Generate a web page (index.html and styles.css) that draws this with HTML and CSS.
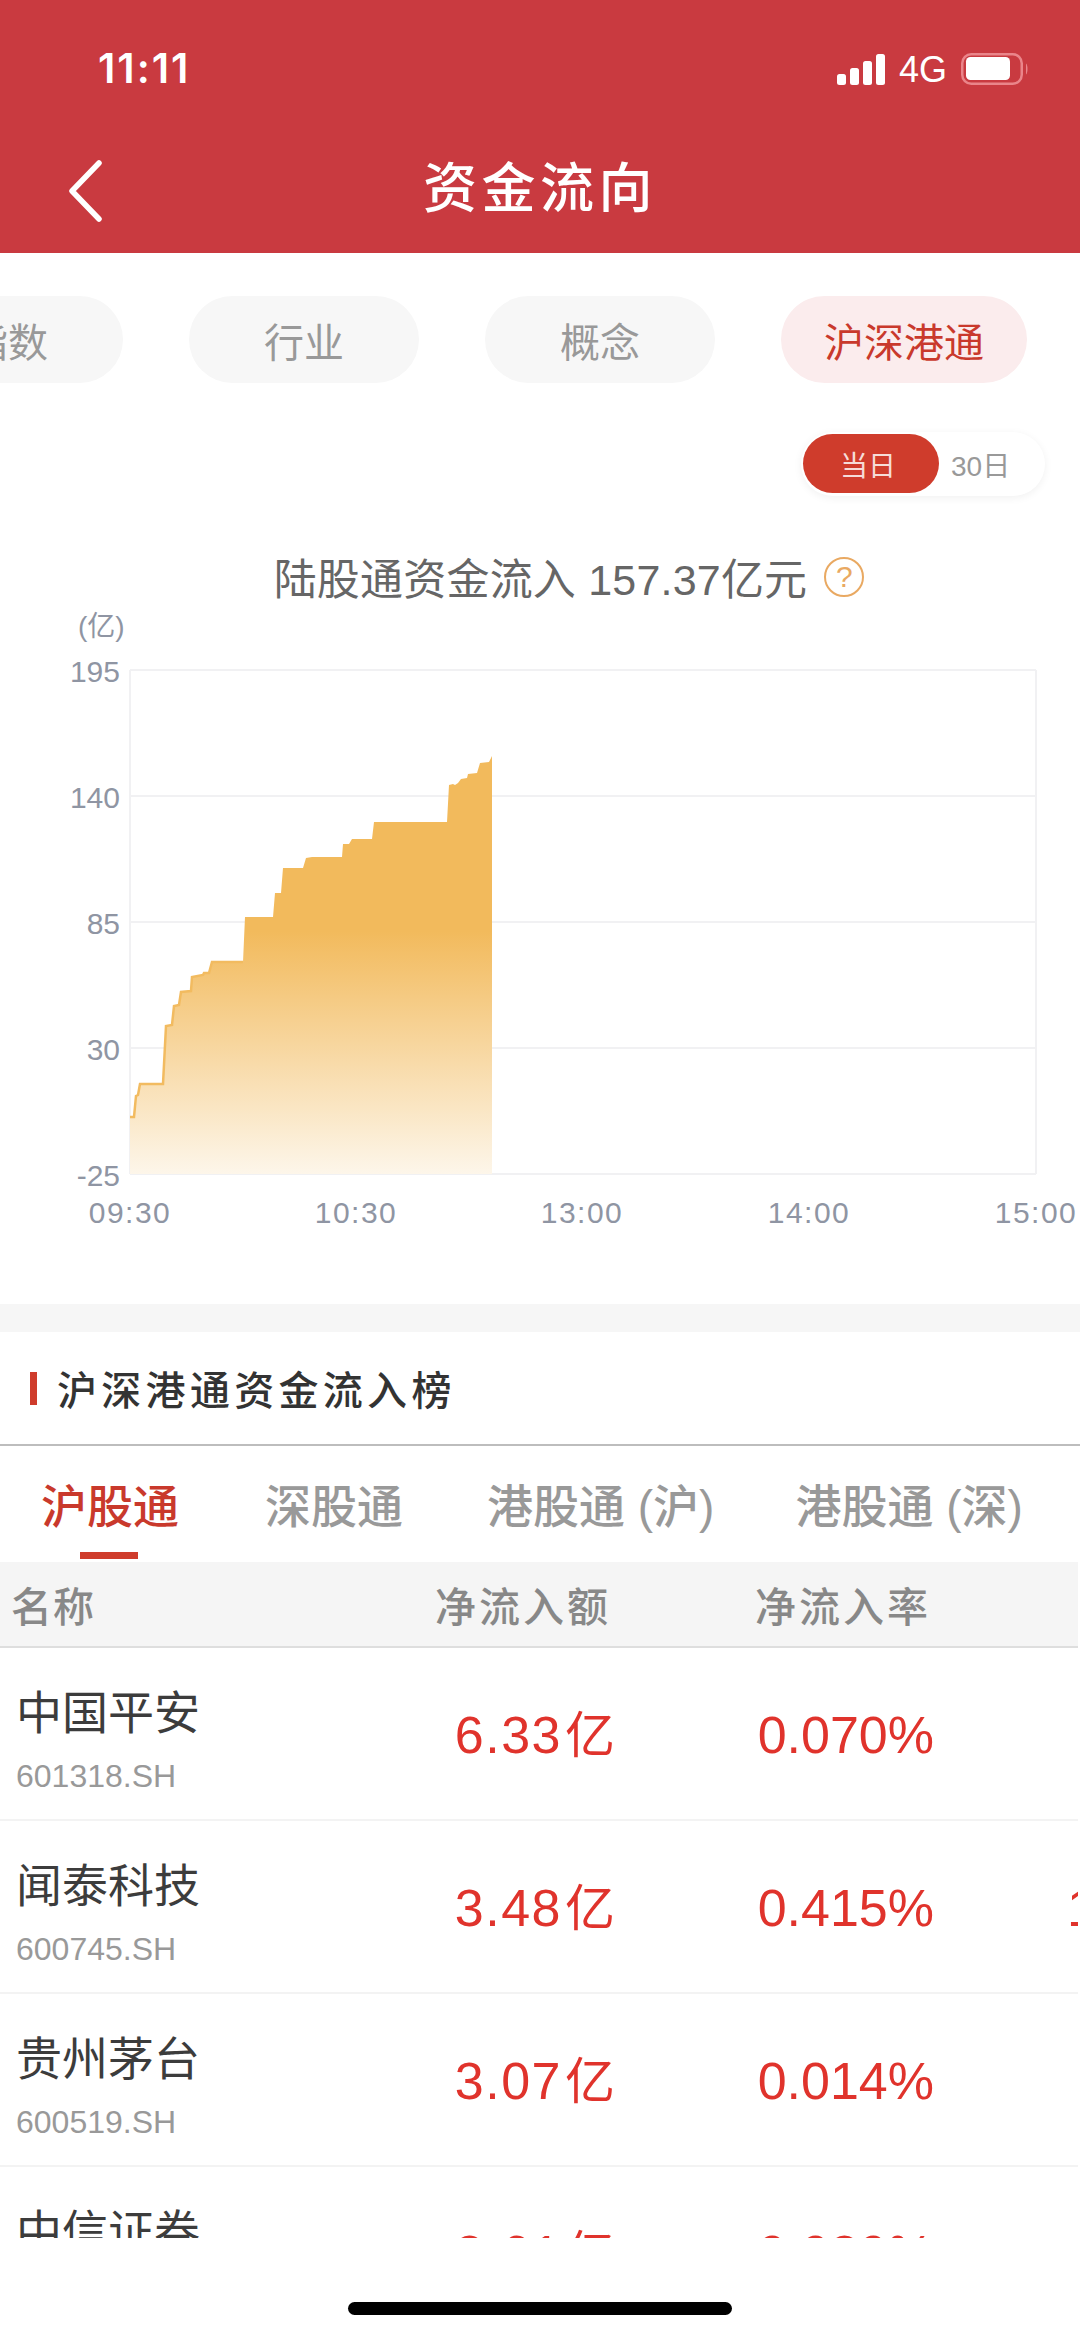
FILE: index.html
```html
<!DOCTYPE html>
<html>
<head>
    <meta charset="utf-8">
    <title>资金流向</title>
    <link rel="stylesheet" href="styles.css">
</head>
<body>
    <div class="app">
        <div class="topbar">
            <div class="status">
                <span class="clock">11:11</span>
                <div class="status-right">
                    <svg class="signal" width="48" height="31" viewBox="0 0 48 31">
                        <rect x="0" y="20" width="9" height="11" rx="2.5" fill="#fff"/>
                        <rect x="13" y="14" width="9" height="17" rx="2.5" fill="#fff"/>
                        <rect x="26" y="7" width="9" height="24" rx="2.5" fill="#fff"/>
                        <rect x="39" y="0" width="9" height="31" rx="2.5" fill="#fff"/>
                    </svg>
                    <span class="net">4G</span>
                    <svg class="battery" width="68" height="32" viewBox="0 0 68 32">
                        <rect x="1.25" y="1.25" width="59.5" height="29.5" rx="9" fill="none" stroke="#ea858a" stroke-width="2.5"/>
                        <rect x="5" y="4" width="44" height="23" rx="4.5" fill="#fff"/>
                        <path d="M65 10.5c2 1.500 2 9.500 0 11z" fill="#ea858a"/>
                    </svg>
                </div>
            </div>
            <div class="navbar">
                <svg class="back" width="40" height="62" viewBox="0 0 40 62">
                    <polyline points="33,3 6,31 33,59" fill="none" stroke="#fff" stroke-width="5.500" stroke-linecap="round" stroke-linejoin="round"/>
                </svg>
                <h1>资金流向</h1>
            </div>
        </div>

        <div class="pills">
            <span class="pill">指数</span>
            <span class="pill">行业</span>
            <span class="pill">概念</span>
            <span class="pill pill-on">沪深港通</span>
        </div>

        <div class="range-row">
            <div class="range">
                <span class="range-on">当日</span>
                <span class="range-off">30日</span>
            </div>
        </div>

        <div class="chart-title">
            <span>陆股通资金流入 157.37亿元</span>
            <span class="help">?</span>
        </div>

        <svg class="chart" width="1080" height="640" viewBox="0 600 1080 640">
            <defs>
                <linearGradient id="flow" x1="0" y1="756" x2="0" y2="1174" gradientUnits="userSpaceOnUse">
                    <stop offset="0" stop-color="#f2ba5c"/>
                    <stop offset="0.42" stop-color="#f2ba5c"/>
                    <stop offset="1" stop-color="#fdf6ea"/>
                </linearGradient>
            </defs>
            <g stroke="#f1f1f3" stroke-width="2" fill="none">
                <path d="M130 670H1036M130 796H1036M130 922H1036M130 1048H1036M130 1174H1036"/>
                <path d="M130 670V1174M1036 670V1174"/>
            </g>
            <polygon fill="url(#flow)" points="130,1117 134,1117 136,1096 138,1095 140,1084 163,1084 166,1026 172,1025 174,1006 179,1005 181,992 191,991 192,977 203,975 204,973 209,973 212,962 243,962 245,917 273,917 275,893 281,893 283,868 303,868 306,858 312,857 342,857 343,844 349,844 352,839 372,839 374,822 447,822 449,785 453,784 455,785 458,783 461,779 467,778 468,774 477,773 480,763 489,762 492,756 492,1174 130,1174"/>
            <polyline fill="none" stroke="#f2bb60" stroke-width="2.500" points="130,1117 134,1117 136,1096 138,1095 140,1084 163,1084 166,1026 172,1025 174,1006 179,1005 181,992 191,991 192,977 203,975 204,973 209,973 212,962 243,962"/>
            <g class="tick tick-y">
                <text x="120" y="682">195</text>
                <text x="120" y="808">140</text>
                <text x="120" y="934">85</text>
                <text x="120" y="1060">30</text>
                <text x="120" y="1186">-25</text>
            </g>
            <g class="tick tick-x">
                <text x="130" y="1223">09:30</text>
                <text x="356" y="1223">10:30</text>
                <text x="582" y="1223">13:00</text>
                <text x="809" y="1223">14:00</text>
                <text x="1036" y="1223">15:00</text>
            </g>
            <text class="unit" x="78" y="636">(亿)</text>
        </svg>

        <div class="gap-band"></div>

        <div class="section-head">
            <span class="section-mark"></span>
            <span class="section-name">沪深港通资金流入榜</span>
        </div>

        <div class="tabs">
            <span class="tab tab-on">沪股通</span>
            <span class="tab">深股通</span>
            <span class="tab">港股通 (沪)</span>
            <span class="tab">港股通 (深)</span>
        </div>

        <div class="table-head">
            <span class="col-name">名称</span>
            <span class="col-amount">净流入额</span>
            <span class="col-rate">净流入率</span>
        </div>

        <div class="rows">
            <div class="row">
                <div class="col-name">
                    <div class="stock">中国平安</div>
                    <div class="code">601318.SH</div>
                </div>
                <span class="col-amount val">6.33<span class="yi">亿</span></span>
                <span class="col-rate val">0.070%</span>
            </div>
            <div class="row">
                <div class="col-name">
                    <div class="stock">闻泰科技</div>
                    <div class="code">600745.SH</div>
                </div>
                <span class="col-amount val">3.48<span class="yi">亿</span></span>
                <span class="col-rate val">0.415%</span>
                <span class="col-more val">1</span>
            </div>
            <div class="row">
                <div class="col-name">
                    <div class="stock">贵州茅台</div>
                    <div class="code">600519.SH</div>
                </div>
                <span class="col-amount val">3.07<span class="yi">亿</span></span>
                <span class="col-rate val">0.014%</span>
            </div>
            <div class="row">
                <div class="col-name">
                    <div class="stock">中信证券</div>
                    <div class="code">600030.SH</div>
                </div>
                <span class="col-amount val">2.61<span class="yi">亿</span></span>
                <span class="col-rate val">0.080%</span>
            </div>
        </div>

        <div class="home-wrap"><div class="home-bar"></div></div>
    </div>
</body>
</html>
```

FILE: styles.css
```css
* {
    box-sizing: border-box;
}

html, body {
    margin: 0;
    padding: 0;
    background-color: #fff;
}

.app {
    width: 1080px;
    height: 2337px;
    overflow: hidden;
    font-family: "Liberation Sans", "Noto Sans CJK SC", sans-serif;
}

/* red header */
.topbar {
    height: 253px;
    background-color: #c93a40;
    color: #fff;
}

.status {
    height: 136px;
    padding: 53px 51px 0 98px;
    display: flex;
    justify-content: space-between;
    align-items: flex-start;
}

.clock {
    font-family: Inter, sans-serif;
    font-size: 41px;
    font-weight: 600;
    line-height: 31px;
    letter-spacing: 2px;
}

.status-right {
    display: flex;
    align-items: center;
}

.net {
    font-size: 36px;
    line-height: 31px;
    margin: 0 14px;
}

.navbar {
    position: relative;
    height: 117px;
    display: flex;
    justify-content: center;
    padding-top: 16px;
}

.navbar h1 {
    margin: 0;
    font-size: 54px;
    line-height: 74px;
    font-weight: 500;
    letter-spacing: 4.500px;
}

.back {
    position: absolute;
    left: 66px;
    top: 24px;
}

/* category pills */
.pills {
    display: flex;
    gap: 66px;
    margin-top: 43px;
    margin-left: -107px;
}

.pill {
    flex: none;
    width: 230px;
    height: 87px;
    border-radius: 44px;
    background-color: #f7f7f7;
    color: #999;
    font-size: 40px;
    display: flex;
    align-items: center;
    justify-content: center;
}

.pill-on {
    width: 246px;
    background-color: #fbeced;
    color: #c9392c;
}

.range-row {
    display: flex;
    justify-content: flex-end;
    margin-top: 49px;
    padding-right: 35px;
}

.range {
    width: 244px;
    height: 64px;
    padding: 2px 2px 3px 2px;
    border-radius: 32px;
    background-color: #fff;
    box-shadow: 0 2px 8px rgba(0, 0, 0, 0.06);
    display: flex;
    align-items: center;
}

.range-on {
    width: 136px;
    height: 59px;
    padding-right: 6px;
    border-radius: 30px;
    background-color: #cf3c2c;
    color: #f6dcd8;
    font-size: 28px;
    display: flex;
    align-items: center;
    justify-content: center;
}

.range-off {
    margin-left: 12px;
    font-size: 28px;
    color: #999;
}

.chart-title {
    display: flex;
    align-items: center;
    justify-content: center;
    height: 60px;
    margin-top: 50px;
    padding-left: 58px;
    font-size: 43px;
    color: #666;
    letter-spacing: 0.200px;
}

.help {
    width: 40px;
    height: 40px;
    margin-top: 2px;
    margin-left: 17px;
    border: 2px solid #e9a962;
    border-radius: 50%;
    color: #e9a962;
    font-size: 30px;
    line-height: 36px;
    text-align: center;
}

.chart {
    display: block;
    margin-top: -6px;
}

.tick {
    font-family: "Liberation Sans", sans-serif;
    font-size: 30px;
    fill: #8f95a3;
}

.tick-y {
    text-anchor: end;
}

.tick-x {
    text-anchor: middle;
    letter-spacing: 1.500px;
}

.unit {
    font-size: 28px;
    fill: #8f95a3;
}

.gap-band {
    height: 28px;
    margin-top: 64px;
    background-color: #f6f6f6;
}

.section-head {
    height: 114px;
    display: flex;
    align-items: center;
    padding-left: 30px;
    border-bottom: 2px solid #bdbdbd;
}

.section-mark {
    width: 7px;
    height: 33px;
    background-color: #cf3c2c;
}

.section-name {
    margin-left: 20px;
    font-size: 40px;
    font-weight: 500;
    letter-spacing: 4.300px;
    color: #333;
}

/* market tabs */
.tabs {
    height: 116px;
    display: flex;
    padding-left: 41px;
    padding-top: 30px;
    font-size: 46px;
    font-weight: 500;
    color: #999;
}

.tab {
    line-height: 62px;
    margin-right: 86px;
    white-space: nowrap;
}

.tab:nth-child(2) {
    margin-right: 84px;
}

.tab:nth-child(3) {
    margin-right: 81px;
}

.tab-on {
    position: relative;
    color: #c9392c;
}

.tab-on::after {
    content: "";
    position: absolute;
    left: 39px;
    top: 76px;
    width: 58px;
    height: 7px;
    background-color: #cf3c2c;
}

.table-head {
    width: 1078px;
    height: 86px;
    background-color: #f5f5f5;
    border-bottom: 2px solid #dedede;
    display: flex;
    align-items: center;
    font-size: 41px;
    font-weight: 500;
    color: #888;
}

.table-head .col-name {
    padding-left: 11px;
    width: 435px;
    flex: none;
    letter-spacing: 1px;
}

.table-head .col-amount {
    width: 320px;
    flex: none;
    letter-spacing: 3px;
}

.table-head .col-rate {
    flex: none;
    letter-spacing: 3px;
}

.rows {
    width: 1078px;
    height: 590px;
    overflow: hidden;
}

.row {
    height: 173px;
    padding-left: 16px;
    display: flex;
    align-items: center;
    border-bottom: 2px solid #f3f3f3;
}

.row .col-name {
    width: 340px;
    flex: none;
    margin-top: 7px;
}

.stock {
    margin-top: 3px;
    font-size: 46px;
    line-height: 62px;
    color: #3c3c3c;
}

.code {
    margin-top: 12px;
    font-size: 32px;
    line-height: 40px;
    color: #999;
}

.val {
    margin-top: 3px;
    font-size: 52px;
    line-height: 60px;
    color: #e0332c;
    text-align: right;
    flex: none;
    white-space: nowrap;
}

.row .col-amount {
    width: 259px;
    letter-spacing: 1.500px;
}

.yi {
    margin-left: 3px;
    font-size: 50px;
    letter-spacing: 0;
}

.row .col-rate {
    width: 319px;
}

.col-more {
    margin-left: 133px;
}

.home-wrap {
    height: 90px;
    padding-top: 64px;
    display: flex;
    justify-content: center;
}

.home-bar {
    width: 384px;
    height: 13px;
    border-radius: 7px;
    background-color: #000;
}
```
